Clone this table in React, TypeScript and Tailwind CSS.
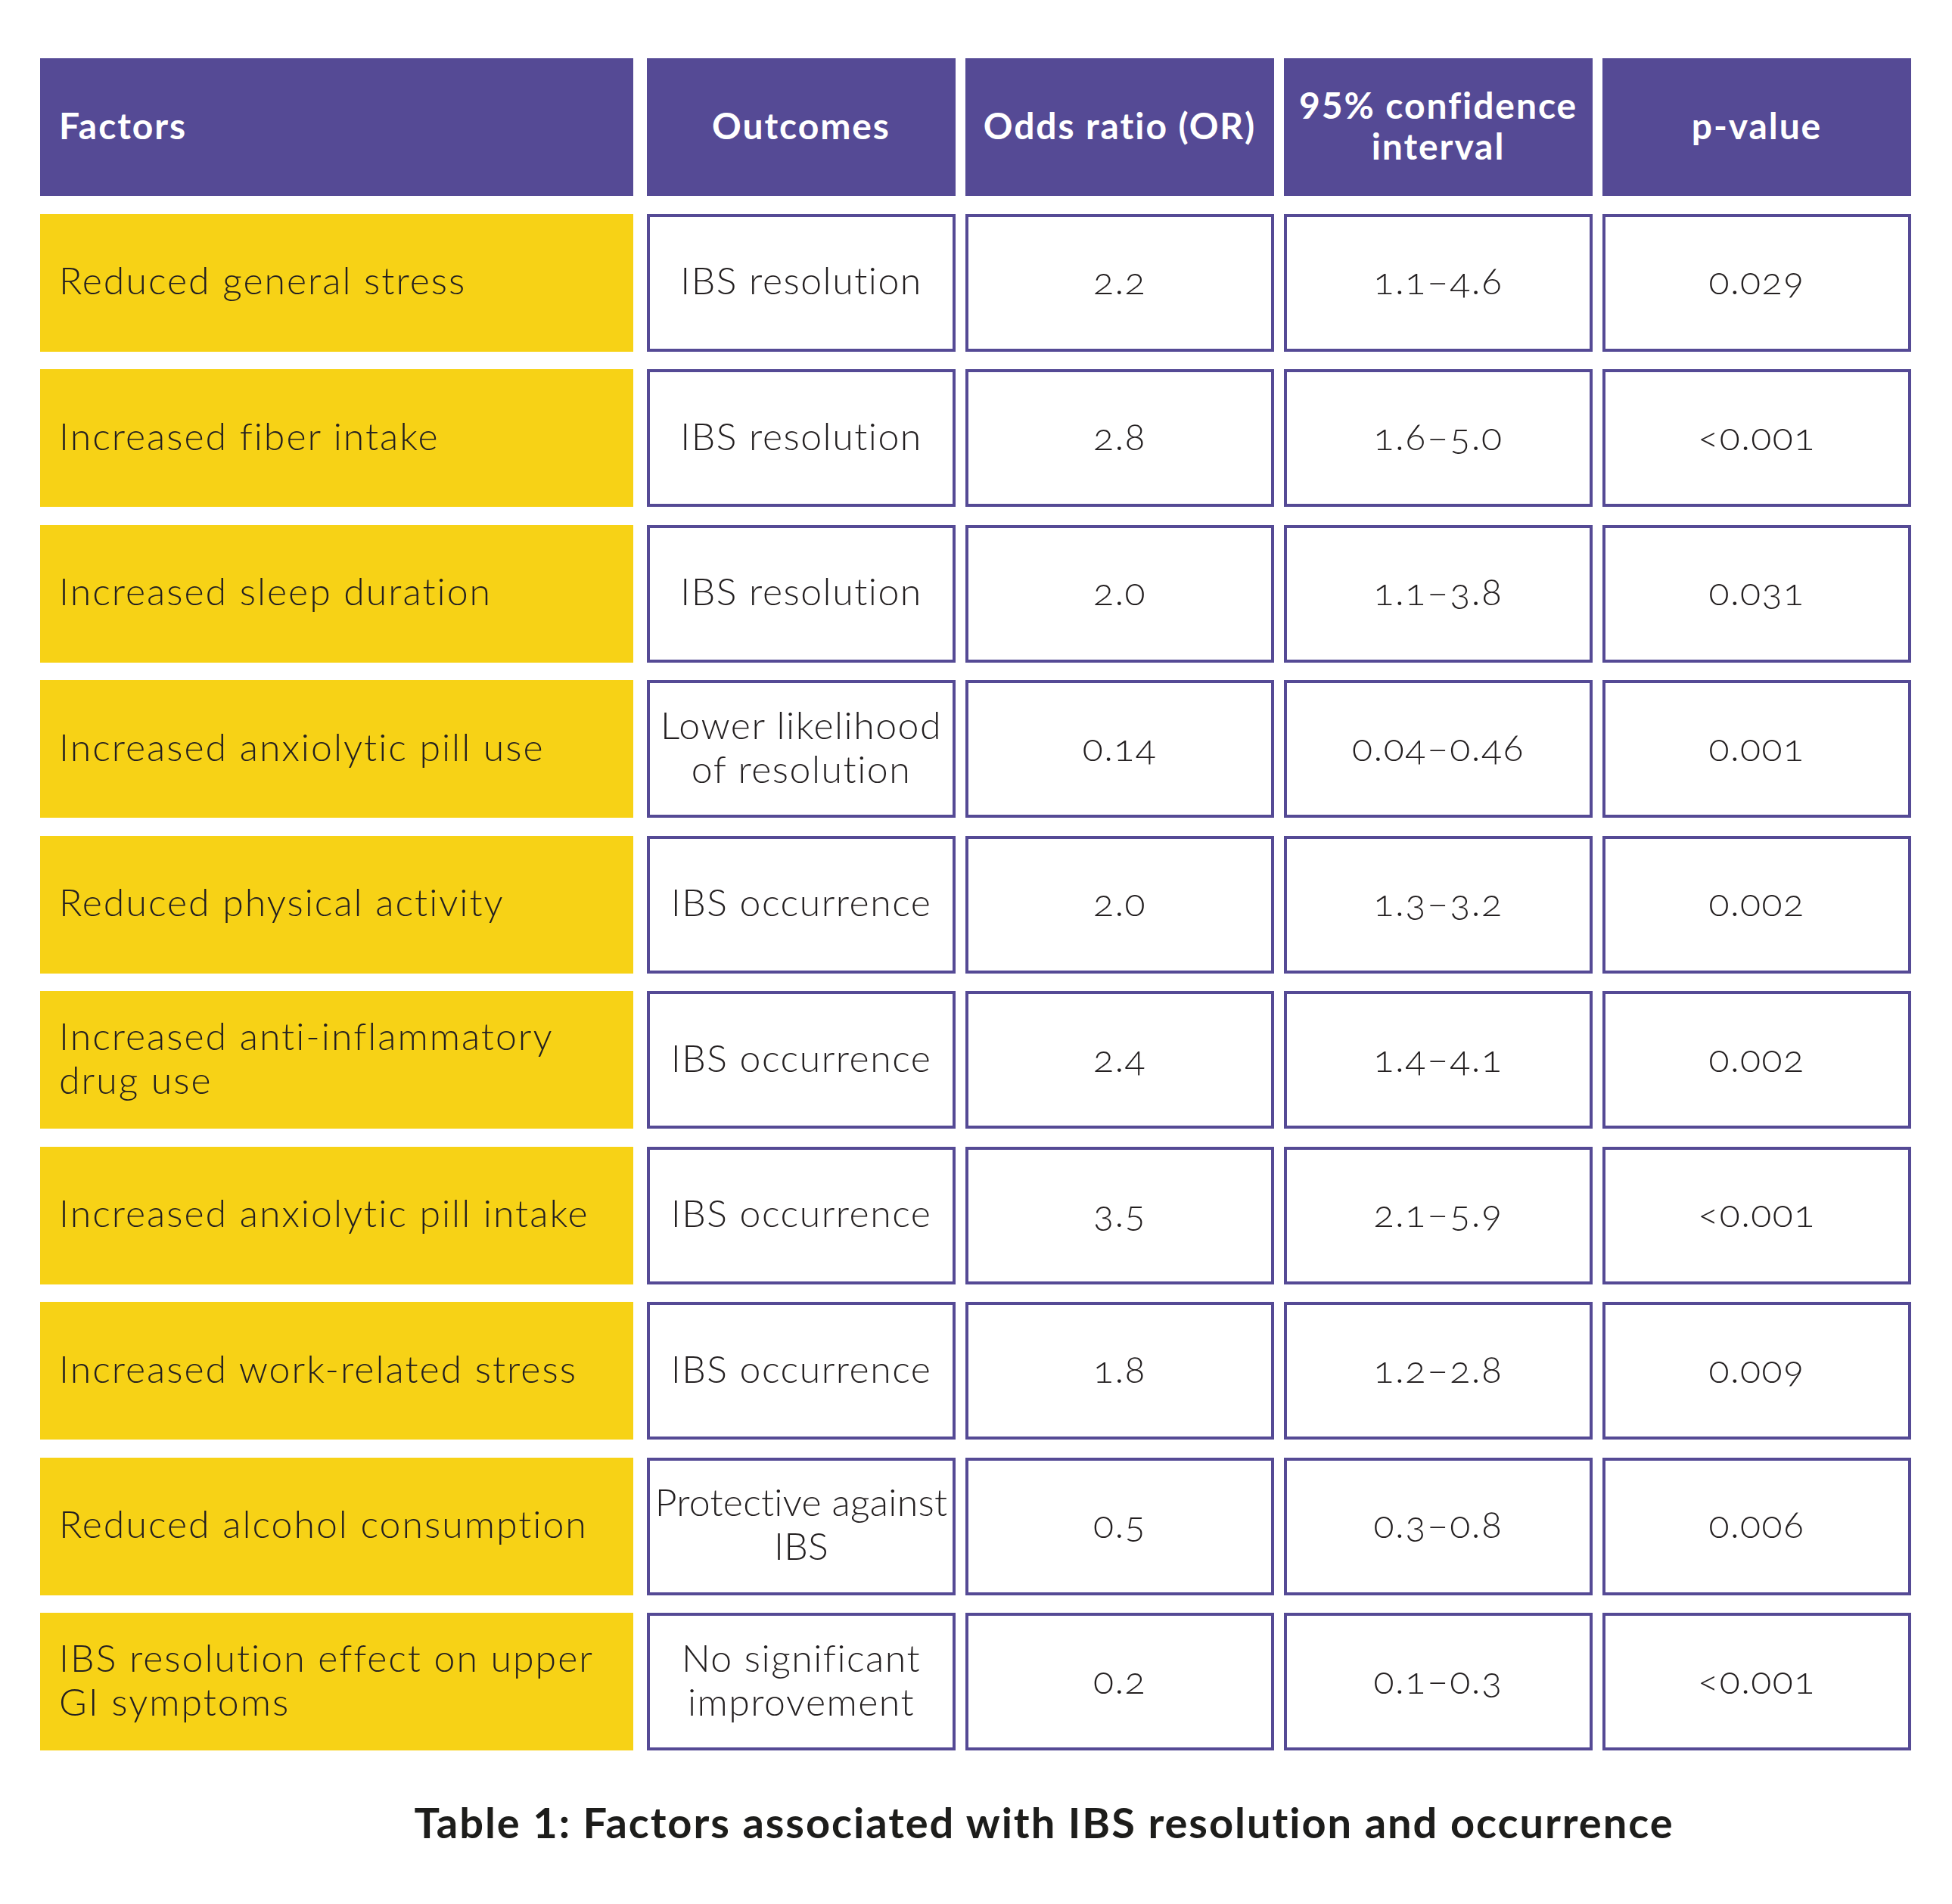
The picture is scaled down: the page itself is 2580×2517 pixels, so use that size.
import React from 'react';

type Row = { factor: React.ReactNode; outcome: React.ReactNode; or: string; ci: string; p: string; tight?: boolean };

const rows: Row[] = [
  { factor: 'Reduced general stress', outcome: 'IBS resolution', or: '2.2', ci: '1.1–4.6', p: '0.029' },
  { factor: 'Increased fiber intake', outcome: 'IBS resolution', or: '2.8', ci: '1.6–5.0', p: '<0.001' },
  { factor: 'Increased sleep duration', outcome: 'IBS resolution', or: '2.0', ci: '1.1–3.8', p: '0.031' },
  { factor: 'Increased anxiolytic pill use', outcome: <>Lower likelihood<br />of resolution</>, or: '0.14', ci: '0.04–0.46', p: '0.001' },
  { factor: 'Reduced physical activity', outcome: 'IBS occurrence', or: '2.0', ci: '1.3–3.2', p: '0.002' },
  { factor: <>Increased anti-inflammatory<br />drug use</>, outcome: 'IBS occurrence', or: '2.4', ci: '1.4–4.1', p: '0.002' },
  { factor: 'Increased anxiolytic pill intake', outcome: 'IBS occurrence', or: '3.5', ci: '2.1–5.9', p: '<0.001' },
  { factor: 'Increased work-related stress', outcome: 'IBS occurrence', or: '1.8', ci: '1.2–2.8', p: '0.009' },
  { factor: 'Reduced alcohol consumption', outcome: <>Protective against<br />IBS</>, or: '0.5', ci: '0.3–0.8', p: '0.006', tight: true },
  { factor: <>IBS resolution effect on upper<br />GI symptoms</>, outcome: <>No significant<br />improvement</>, or: '0.2', ci: '0.1–0.3', p: '<0.001' },
];

const headCell = 'h-[182px] pb-[4px] bg-[#554a95] flex items-center justify-center text-center text-white font-bold text-[48px] leading-[54px] tracking-[0.04em]';
const dataCell = 'h-[182px] pb-[7px] border-4 border-[#554a95] bg-white flex items-center justify-center text-center whitespace-nowrap text-[#231f20] font-light text-[50px] leading-[58px] tracking-[0.03em] oldstyle-nums';

export default function App() {
  return (
    <div className="w-[2580px] h-[2517px] bg-white" style={{ fontFamily: 'Lato, "Open Sans", sans-serif' }}>
      <div className="pt-[77px] pl-[53px]">
        <div className="grid grid-cols-[789px_408px_408px_408px_408px] gap-x-[13px] gap-y-[23.5px]">
          <div className={`${headCell} w-[784px] !justify-start pl-[25px]`}>Factors</div>
          <div className={headCell}>Outcomes</div>
          <div className={headCell}>Odds ratio (OR)</div>
          <div className={headCell}>95% confidence<br />interval</div>
          <div className={headCell}>p-value</div>

          {rows.map((r, i) => (
            <React.Fragment key={i}>
              <div className="h-[182px] w-[784px] pb-[7px] bg-[#f7d216] flex items-center pl-[25px] text-[#231f20] font-light text-[50px] leading-[58px] tracking-[0.04em]">
                <span>{r.factor}</span>
              </div>
              <div className={dataCell}>
                <span className={r.tight ? 'tracking-[0.005em]' : undefined}>{r.outcome}</span>
              </div>
              <div className={dataCell}>{r.or}</div>
              <div className={dataCell}>{r.ci}</div>
              <div className={dataCell}>{r.p}</div>
            </React.Fragment>
          ))}
        </div>
      </div>
      <div className="mt-[61px] pl-[180px] text-center text-[56px] leading-[68px] font-bold tracking-[0.035em] text-[#1d1d1b]">
        Table 1: Factors associated with IBS resolution and occurrence
      </div>
    </div>
  );
}
